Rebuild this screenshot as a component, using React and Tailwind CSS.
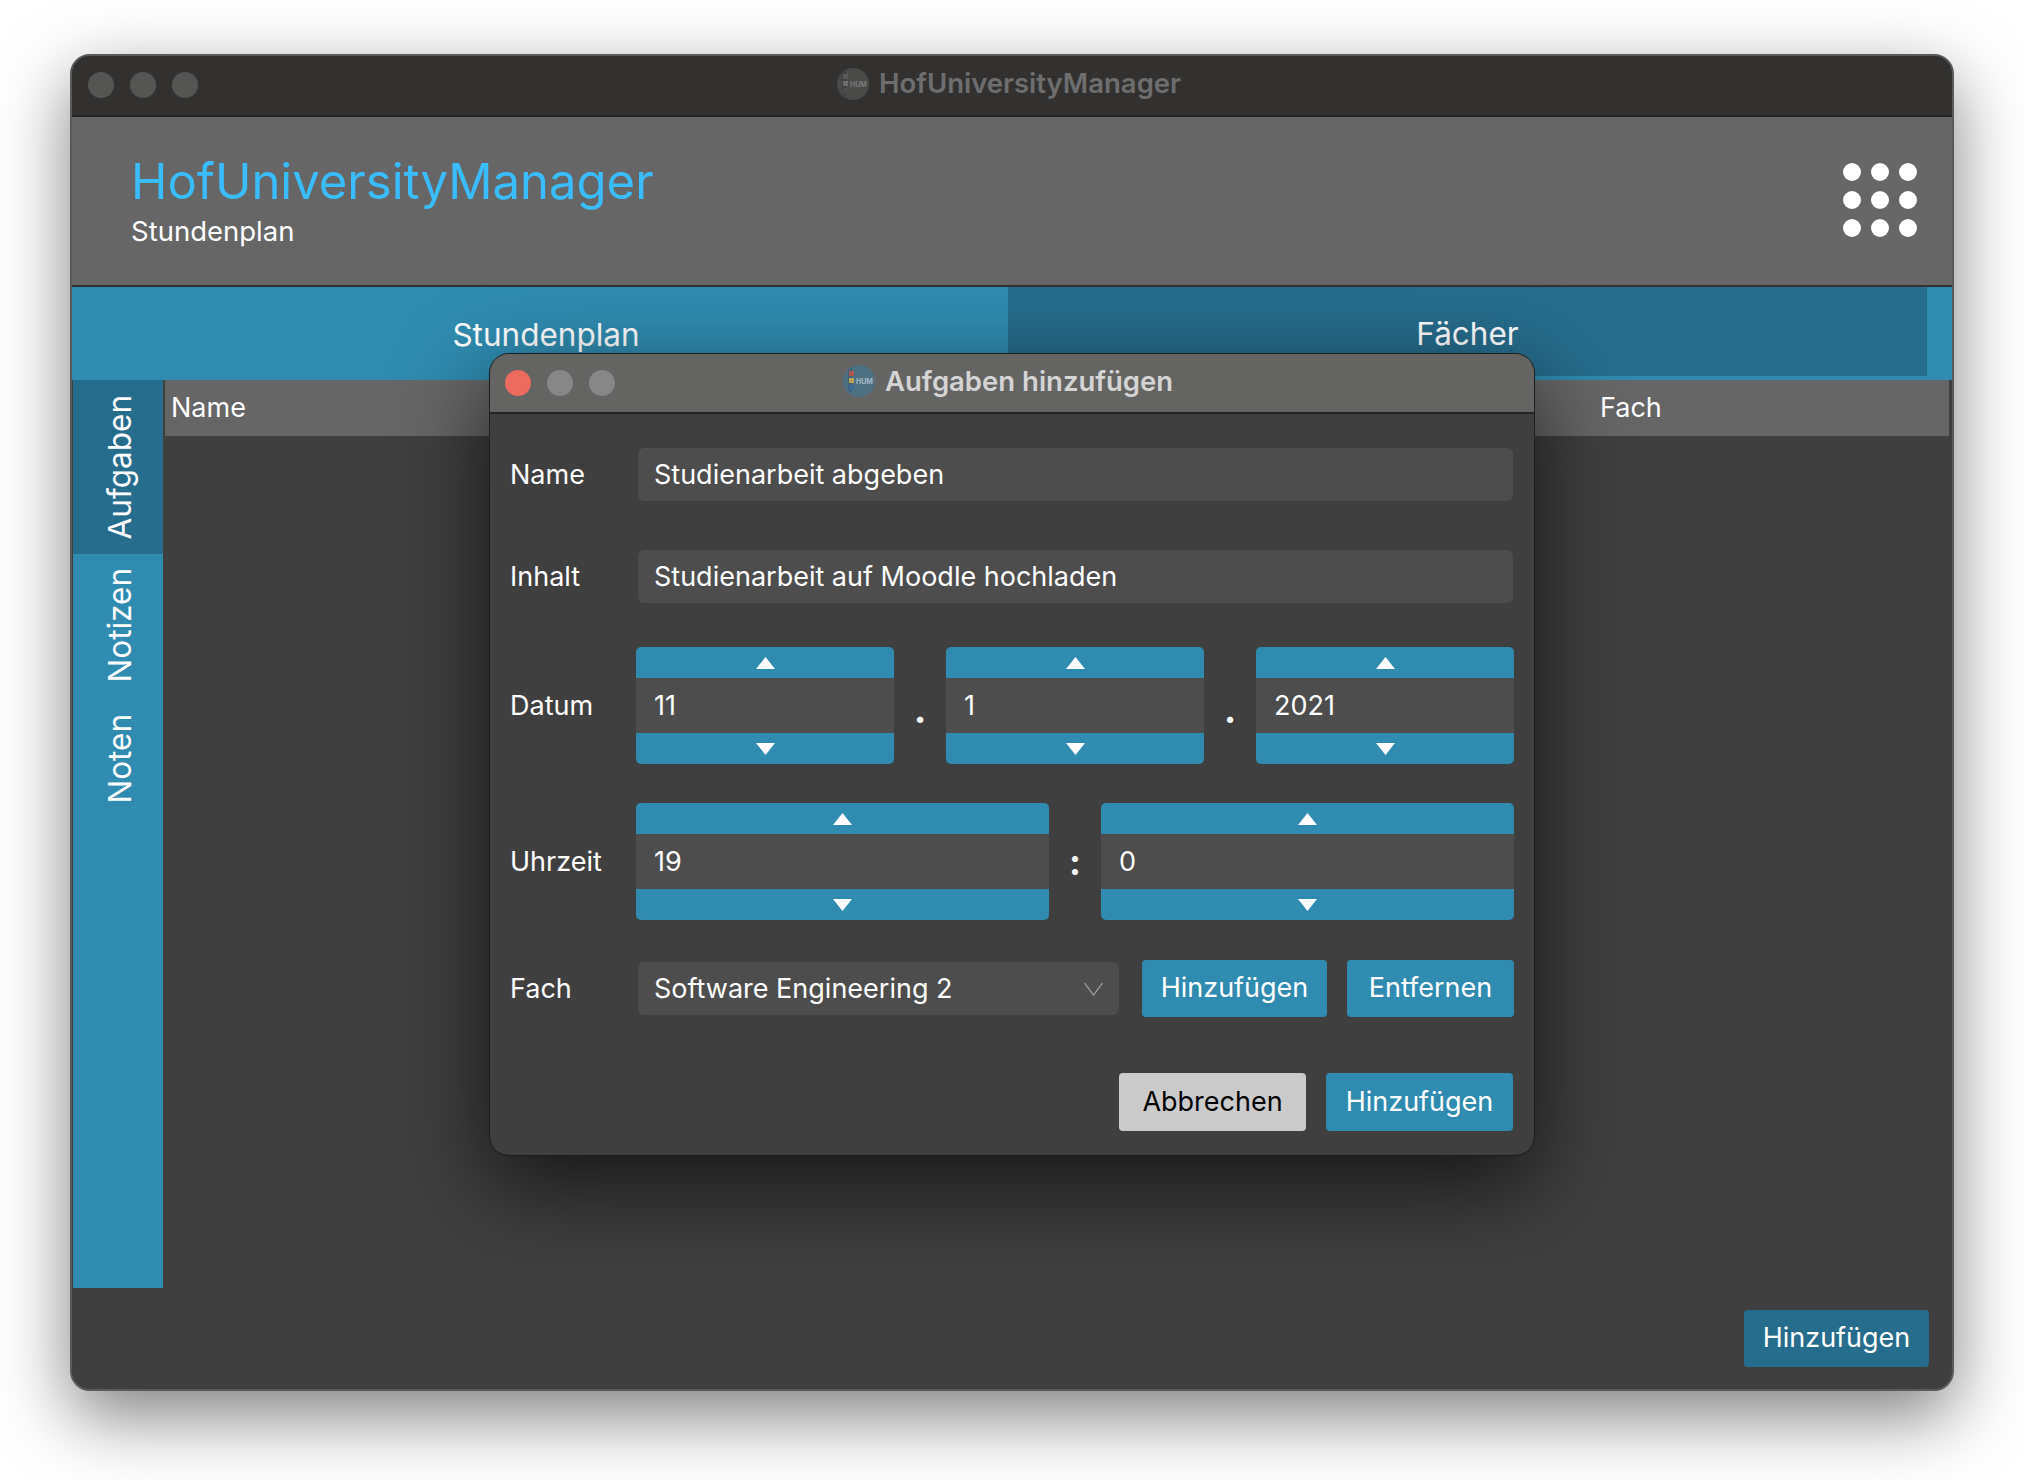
import React from "react";

// logo from the title bars, tiny at this size
function Logo({ dim }) {
  return (
    <svg width="32" height="34" viewBox="0 0 32 34" className="shrink-0">
      <circle cx="16" cy="17" r="16" fill={dim ? "#4a4a49" : "#4d7183"} />
      <path d="M5 6 L9 4 L9 30 L5 26 Z" fill={dim ? "#404040" : "#3f6076"} />
      <rect x="6" y="7" width="5" height="5" fill={dim ? "#5a5a5a" : "#b0584f"} />
      <rect x="6" y="14" width="5" height="5" fill={dim ? "#6e6e6e" : "#bfa34f"} />
      <rect x="6" y="21" width="5" height="5" fill={dim ? "#4e4e4e" : "#3e6a99"} />
      <text x="13" y="19.5" fontSize="7" fontWeight="700" fill={dim ? "#7c7c7c" : "#a9bcc6"}>
        HUM
      </text>
    </svg>
  );
}

function Lights({ active }) {
  const base = active ? "bg-[#878787]" : "bg-[#555554]";
  return (
    <div className="flex gap-[16px]">
      <span className={`w-[26px] h-[26px] rounded-full ${active ? "bg-[#ec6a5e]" : base}`} />
      <span className={`w-[26px] h-[26px] rounded-full ${base}`} />
      <span className={`w-[26px] h-[26px] rounded-full ${base}`} />
    </div>
  );
}

function Arrow({ down }) {
  return (
    <svg width="19" height="12" viewBox="0 0 19 12">
      <polygon points={down ? "0,0 19,0 9.5,12" : "0,12 19,12 9.5,0"} fill="#fff" />
    </svg>
  );
}

function Spinner({ value, className }) {
  return (
    <div className={`flex flex-col h-[117px] rounded-[5px] overflow-hidden ${className}`}>
      <div className="h-[31px] bg-[#2f8bb0] flex items-center justify-center">
        <Arrow />
      </div>
      <div className="flex-1 bg-[#4d4d4d] flex items-center pl-[18px] pt-[1px] text-[27px]">{value}</div>
      <div className="h-[31px] bg-[#2f8bb0] flex items-center justify-center">
        <Arrow down />
      </div>
    </div>
  );
}

function Button({ children, className }) {
  return (
    <button className={`flex items-center justify-center rounded-[4px] text-[27px] ${className}`}>
      {children}
    </button>
  );
}

function Dialog() {
  return (
    <div className="absolute left-[417px] top-[297px] w-[1046px] h-[803px] rounded-[20px] bg-[#3f3f3f] border border-[#1d1d1d] overflow-hidden shadow-[0_30px_90px_rgba(0,0,0,0.65)] text-white flex flex-col">
      <div className="relative h-[60px] shrink-0 bg-[#646463] border-b-2 border-[#232323] flex items-center pl-[15px]">
        <Lights active />
        <div className="absolute left-[353px] top-[10px] flex items-center gap-[10px] text-[27.5px] font-semibold text-[#d4d4d4] leading-none">
          <Logo />
          <span className="pt-[2px]">Aufgaben hinzufügen</span>
        </div>
      </div>

      <div className="flex flex-col pt-[34px] pl-[20px] pr-[19px]">
        <div className="flex items-center h-[53px]">
          <span className="w-[128px] pt-[1px] text-[27px]">Name</span>
          <div className="flex-1 mr-[2px] h-full bg-[#4d4d4d] rounded-[6px] flex items-center pl-[16px] pt-[1px] text-[27px]">
            Studienarbeit abgeben
          </div>
        </div>
        <div className="flex items-center h-[53px] mt-[49px]">
          <span className="w-[128px] pt-[1px] text-[27px]">Inhalt</span>
          <div className="flex-1 mr-[2px] h-full bg-[#4d4d4d] rounded-[6px] flex items-center pl-[16px] pt-[1px] text-[27px]">
            Studienarbeit auf Moodle hochladen
          </div>
        </div>

        <div className="flex items-center mt-[44px]">
          <span className="w-[126px] pt-[1px] text-[27px]">Datum</span>
          <Spinner value="11" className="w-[258px]" />
          <span className="w-[52px] text-center text-[38px] font-bold leading-none pt-[6px]">.</span>
          <Spinner value="1" className="w-[258px]" />
          <span className="w-[52px] text-center text-[38px] font-bold leading-none pt-[6px]">.</span>
          <Spinner value="2021" className="w-[258px]" />
        </div>

        <div className="flex items-center mt-[39px]">
          <span className="w-[126px] pt-[1px] text-[27px]">Uhrzeit</span>
          <Spinner value="19" className="w-[413px]" />
          <span className="w-[52px] text-center text-[36px] font-bold leading-none">:</span>
          <Spinner value="0" className="w-[413px]" />
        </div>

        <div className="flex items-center mt-[40px] h-[57px]">
          <span className="w-[128px] pt-[1px] text-[27px]">Fach</span>
          <div className="w-[481px] h-[53px] bg-[#4d4d4d] rounded-[6px] flex items-center justify-between pl-[16px] pr-[16px] pt-[1px] text-[27px]">
            <span>Software Engineering 2</span>
            <svg width="19" height="14" viewBox="0 0 19 14" fill="none">
              <path d="M0.5 1 L9.5 13 L18.5 1" stroke="#a8a8a8" strokeWidth="1.2" />
            </svg>
          </div>
          <Button className="w-[185px] h-[57px] ml-[23px] bg-[#2f8bb0]">Hinzufügen</Button>
          <Button className="w-[167px] h-[57px] ml-[20px] bg-[#2f8bb0]">Entfernen</Button>
        </div>

        <div className="flex justify-end gap-[20px] mt-[56px] mr-[2px]">
          <Button className="w-[187px] h-[58px] bg-[#cbcbcb] text-black">Abbrechen</Button>
          <Button className="w-[187px] h-[58px] bg-[#2f8bb0]">Hinzufügen</Button>
        </div>
      </div>
    </div>
  );
}

export default function App() {
  return (
    <div className="w-[2024px] h-[1480px] bg-white pt-[54px] pl-[70px] font-['Inter',sans-serif]">
      <div className="relative w-[1884px] h-[1337px] rounded-[20px] bg-[#3f3f3f] border-2 border-[#5a5a5a] overflow-hidden shadow-[0_25px_70px_rgba(0,0,0,0.5)] text-white flex flex-col">
        {/* title bar */}
        <div className="relative h-[61px] shrink-0 bg-[#323130] border-b-2 border-[#242424] flex items-center pl-[16px] pb-[1px]">
          <Lights />
          <div className="absolute left-[765px] top-[11px] flex items-center gap-[10px] text-[27.5px] font-semibold text-[#6e6e6e] leading-none">
            <Logo dim />
            <span>HofUniversityManager</span>
          </div>
        </div>

        {/* header */}
        <div className="h-[170px] shrink-0 bg-[#666666] border-b-2 border-[#333333] flex justify-between pl-[59px] pr-[35px]">
          <div className="pt-[35px]">
            <h1 className="text-[49px] leading-[60px] text-[#39bdff]">HofUniversityManager</h1>
            <p className="text-[27.5px] leading-[32px] mt-[3px]">Stundenplan</p>
          </div>
          <div className="grid grid-cols-3 gap-[10px] mt-[46px] h-[74px]">
            {[1, 2, 3, 4, 5, 6, 7, 8, 9].map((i) => (
              <span key={i} className="w-[18px] h-[18px] rounded-full bg-white" />
            ))}
          </div>
        </div>

        {/* tabs */}
        <div className="h-[93px] shrink-0 bg-[#2f8bb0] flex text-[31.5px]">
          <div className="w-[936px] flex items-center justify-center pl-[12px] pt-[2px]">Stundenplan</div>
          <div className="w-[919px] h-[89px] bg-[#266c8c] flex items-center justify-center pt-[4px]">Fächer</div>
        </div>

        <div className="flex flex-1 min-h-0">
          {/* side tabs */}
          <div className="w-[90px] ml-[1px] h-[908px] shrink-0 bg-[#2f8bb0] flex flex-col text-[31.5px]">
            <div className="h-[174px] bg-[#266c8c] flex items-center justify-center pl-[3px]">
              <span className="[writing-mode:vertical-rl] rotate-180">Aufgaben</span>
            </div>
            <div className="h-[142px] flex items-center justify-center pl-[3px]">
              <span className="[writing-mode:vertical-rl] rotate-180">Notizen</span>
            </div>
            <div className="h-[126px] flex items-center justify-center pl-[3px]">
              <span className="[writing-mode:vertical-rl] rotate-180">Noten</span>
            </div>
          </div>

          <div className="flex-1 flex flex-col pl-[2px]">
            <div className="h-[56px] w-[1784px] shrink-0 bg-[#666666] flex items-center pt-[1px] text-[27px]">
              <span className="w-[1435px] pl-[6px]">Name</span>
              <span>Fach</span>
            </div>
            <div className="flex-1 flex justify-end items-end pr-[23px] pb-[22px]">
              <Button className="w-[185px] h-[57px] bg-[#266c8c]">Hinzufügen</Button>
            </div>
          </div>
        </div>

        <Dialog />
      </div>
    </div>
  );
}
